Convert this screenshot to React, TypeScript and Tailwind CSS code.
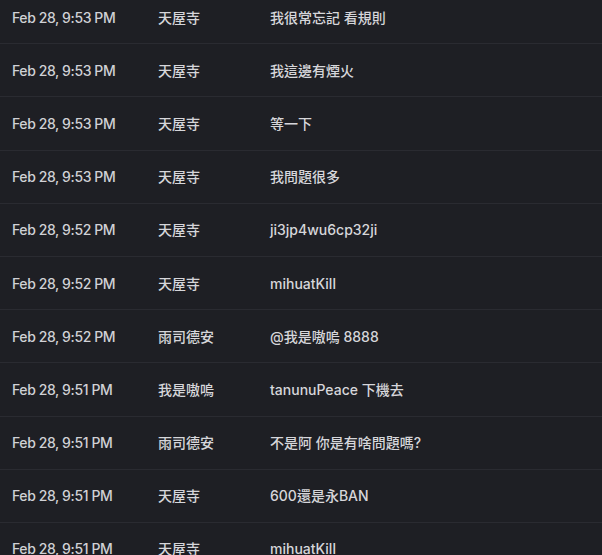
import React from "react";

const rows: [string, string, string][] = [
  ["Feb 28, 9:53 PM", "天屋寺", "我很常忘記 看規則"],
  ["Feb 28, 9:53 PM", "天屋寺", "我這邊有煙火"],
  ["Feb 28, 9:53 PM", "天屋寺", "等一下"],
  ["Feb 28, 9:53 PM", "天屋寺", "我問題很多"],
  ["Feb 28, 9:52 PM", "天屋寺", "ji3jp4wu6cp32ji"],
  ["Feb 28, 9:52 PM", "天屋寺", "mihuatKill"],
  ["Feb 28, 9:52 PM", "雨司德安", "@我是嗷嗚 8888"],
  ["Feb 28, 9:51 PM", "我是嗷嗚", "tanunuPeace 下機去"],
  ["Feb 28, 9:51 PM", "雨司德安", "不是阿 你是有啥問題嗎?"],
  ["Feb 28, 9:51 PM", "天屋寺", "600還是永BAN"],
  ["Feb 28, 9:51 PM", "天屋寺", "mihuatKill"],
];

export default function App() {
  return (
    <div
      className="w-[602px] h-[555px] overflow-hidden bg-[#1e1f24] text-[#d6d6da] text-[14px] font-medium"
      style={{ fontFamily: '"Inter", "Noto Sans CJK TC", sans-serif' }}
    >
      <div className="-mt-[9px]">
        {rows.map((r, i) => (
          <div
            key={i}
            className="flex items-center h-[53.2px] border-b border-[#2a2b31]"
          >
            <div className="w-[158px] pl-3 shrink-0 text-[#d0d1d5] tracking-[-0.4px]">{r[0]}</div>
            <div className="w-[112px] shrink-0">{r[1]}</div>
            <div className="flex-1">{r[2]}</div>
          </div>
        ))}
      </div>
    </div>
  );
}
